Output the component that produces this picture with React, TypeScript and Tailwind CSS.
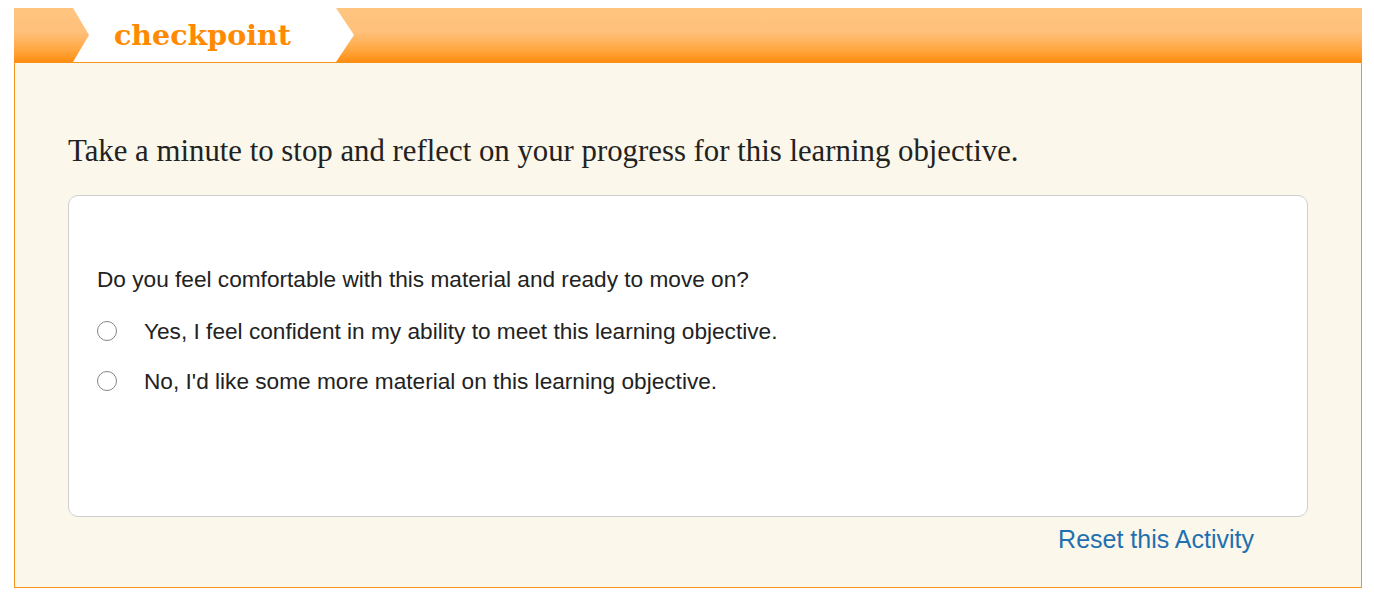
import React from "react";

const options = [
  "Yes, I feel confident in my ability to meet this learning objective.",
  "No, I'd like some more material on this learning objective.",
];

export default function App() {
  return (
    <div className="min-h-screen bg-white pt-[8px] pl-[14px] pr-[12px]">
      {/* Header strip */}
      <div className="h-[54px] bg-[linear-gradient(to_bottom,#ffc580_0%,#ffc07a_45%,#ffa53c_80%,#ff8c0f_100%)]">
        <div className="ml-[59px] flex h-full w-[281px] items-center bg-white pl-[41px] pt-[1px] [clip-path:polygon(0_0,263px_0,281px_27px,263px_54px,0_54px,16px_27px)]">
          <span className="font-['DejaVu_Serif',serif] text-[28.5px] font-bold leading-none text-[#ff8a00]">
            checkpoint
          </span>
        </div>
      </div>

      {/* Body */}
      <div className="border border-[#f7941d] bg-[#fbf7ea] px-[53px] pb-[32px] pt-[70px]">
        <h2 className="font-['Liberation_Serif',serif] text-[30.8px] leading-[36px] text-[#222]">
          Take a minute to stop and reflect on your progress for this learning objective.
        </h2>

        <div className="mt-[26px] h-[322px] rounded-[10px] border border-[#cfcfcf] bg-white px-[28px] pt-[68px]">
          <p className="font-['Liberation_Sans',sans-serif] text-[22.65px] leading-[30px] text-[#222]">
            Do you feel comfortable with this material and ready to move on?
          </p>
          <div className="mt-[22px] flex flex-col gap-[20px]">
            {options.map((label) => (
              <label key={label} className="flex items-center gap-[27px]">
                <span className="h-[20px] w-[20px] rounded-full border border-[#858585] bg-white" />
                <span className="font-['Liberation_Sans',sans-serif] text-[22.65px] leading-[30px] text-[#222]">
                  {label}
                </span>
              </label>
            ))}
          </div>
        </div>

        <div className="flex justify-end pr-[54px] pt-[6px]">
          <a className="font-['Liberation_Sans',sans-serif] text-[25px] leading-[32px] text-[#1f70b0]">
            Reset this Activity
          </a>
        </div>
      </div>
    </div>
  );
}
